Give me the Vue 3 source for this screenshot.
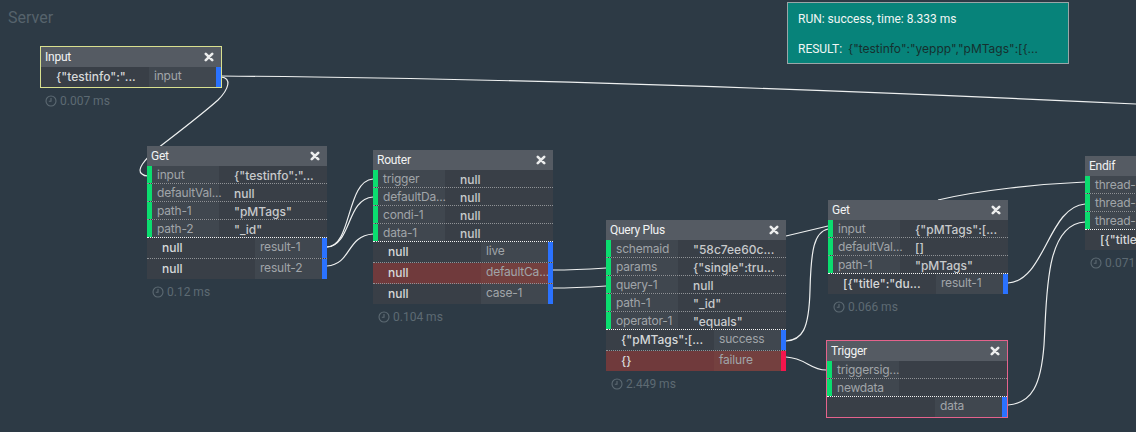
<script setup>
const nodes = [
  {
    id: 'input', title: 'Input', x: 40, y: 46, state: 'selected', time: '0.007 ms',
    inputs: [],
    outputs: [{ value: '{"testinfo":"...', label: 'input' }],
  },
  {
    id: 'get1', title: 'Get', x: 147, y: 146, time: '0.12 ms',
    inputs: [
      { label: 'input', value: '{"testinfo":"...' },
      { label: 'defaultVal...', value: 'null' },
      { label: 'path-1', value: '"pMTags"' },
      { label: 'path-2', value: '"_id"' },
    ],
    outputs: [
      { value: 'null', label: 'result-1' },
      { value: 'null', label: 'result-2' },
    ],
  },
  {
    id: 'router', title: 'Router', x: 373, y: 150, time: '0.104 ms',
    inputs: [
      { label: 'trigger', value: 'null' },
      { label: 'defaultDa...', value: 'null' },
      { label: 'condi-1', value: 'null' },
      { label: 'data-1', value: 'null' },
    ],
    outputs: [
      { value: 'null', label: 'live' },
      { value: 'null', label: 'defaultCa...', error: true },
      { value: 'null', label: 'case-1' },
    ],
  },
  {
    id: 'query', title: 'Query Plus', x: 606, y: 220, time: '2.449 ms',
    inputs: [
      { label: 'schemaid', value: '"58c7ee60c...' },
      { label: 'params', value: '{"single":tru...' },
      { label: 'query-1', value: 'null' },
      { label: 'path-1', value: '"_id"' },
      { label: 'operator-1', value: '"equals"' },
    ],
    outputs: [
      { value: '{"pMTags":[...', label: 'success' },
      { value: '{}', label: 'failure', error: true, failed: true },
    ],
  },
  {
    id: 'get2', title: 'Get', x: 828, y: 200, time: '0.066 ms',
    inputs: [
      { label: 'input', value: '{"pMTags":[...' },
      { label: 'defaultVal...', value: '[]' },
      { label: 'path-1', value: '"pMTags"' },
    ],
    outputs: [{ value: '[{"title":"du...', label: 'result-1' }],
  },
  {
    id: 'trigger', title: 'Trigger', x: 826, y: 340, state: 'flagged',
    inputs: [
      { label: 'triggersig...', value: '' },
      { label: 'newdata', value: '' },
    ],
    outputs: [{ value: '', label: 'data' }],
  },
  {
    id: 'endif', title: 'Endif', x: 1085, y: 156, time: '0.071 ms',
    inputs: [
      { label: 'thread-1', value: '' },
      { label: 'thread-2', value: '' },
      { label: 'thread-3', value: '' },
    ],
    outputs: [{ value: '[{"title":"du...', label: 'result-1' }],
  },
]

const wires = [
  'M221 76 C 520 78, 860 91, 1136 104',
  'M221 77 C 232 78, 229 89, 218 100 C 200 116, 176 134, 158 148 C 144 160, 136 170, 142 174 C 144 176, 146 176, 148 176',
  'M327 247 C 352 247, 346 181, 373 179',
  'M327 247 C 352 245, 346 199, 373 197',
  'M327 266 C 352 264, 346 236, 373 234',
  'M553 270 C 570 270, 590 269, 606 268',
  'M553 288 C 570 288, 590 287, 606 286',
  'M786 236 L 828 226',
  'M786 341 C 802 340, 809 330, 810 290 C 811 250, 814 232, 828 229',
  'M786 357 C 806 358, 810 370, 826 370',
  'M1008 283 C 1045 281, 1048 207, 1085 204',
  'M1008 405 C 1032 403, 1041 385, 1044 345 C 1047 300, 1044 224, 1085 222',
  'M938 200 C 980 190, 1040 184, 1085 182',
]
</script>

<template>
  <div class="canvas">
    <div class="server-title">Server</div>

    <svg class="wires" width="1136" height="432" viewBox="0 0 1136 432">
      <path v-for="d in wires" :key="d" :d="d" />
    </svg>

    <div
      v-for="node in nodes"
      :key="node.id"
      class="node"
      :style="{ left: node.x + 'px', top: node.y + 'px' }"
    >
      <div class="box" :class="node.state">
        <div class="node-header">
          <span>{{ node.title }}</span>
          <svg class="close" width="10" height="10" viewBox="0 0 10 10">
            <path d="M1.8 1.8 L8.2 8.2 M8.2 1.8 L1.8 8.2" />
          </svg>
        </div>
        <div v-if="node.inputs.length" class="inputs">
          <div v-for="row in node.inputs" :key="row.label" class="row in-row">
            <i class="handle green"></i>
            <span class="label">{{ row.label }}</span>
            <span class="value">{{ row.value }}</span>
          </div>
        </div>
        <div class="outputs">
          <div v-for="row in node.outputs" :key="row.label" class="row out-row" :class="{ error: row.error }">
            <span class="value">{{ row.value }}</span>
            <span class="label">{{ row.label }}</span>
            <i class="handle" :class="row.failed ? 'red' : 'blue'"></i>
          </div>
        </div>
      </div>
      <div v-if="node.time" class="timer">
        <svg width="12" height="12" viewBox="0 0 12 12">
          <circle cx="6" cy="6" r="5" />
          <path d="M6 3 V6.3 H3.8" />
        </svg>
        {{ node.time }}
      </div>
    </div>

    <div class="run-box">
      <div>RUN: success, time: 8.333 ms</div>
      <div class="result-line">RESULT: <span class="result-value">{"testinfo":"yeppp","pMTags":[{...</span></div>
    </div>
  </div>
</template>

<style scoped>
.canvas {
  position: relative;
  width: 1136px;
  height: 432px;
  overflow: hidden;
  background: #2d3a45;
  font-family: Roboto, "Liberation Sans", sans-serif;
  font-size: 12px;
}
.server-title { padding: 9px 0 0 8px; font-size: 16px; line-height: 18px; color: #56636c; }
.wires { position: absolute; left: 0; top: 0; }
.wires path { fill: none; stroke: #eef0f0; stroke-width: 1.2; }

.node { position: absolute; width: 180px; }
.box { background: #393f47; box-sizing: border-box; }
.box.selected { width: 182px; border: 1px solid #d9e08f; }
.box.flagged { width: 182px; border: 1px solid #e5638c; }
.node-header {
  display: flex;
  justify-content: space-between;
  align-items: center;
  height: 20px;
  padding: 0 7px 0 4px;
  background: #555b63;
  color: #f2f3f3;
  font-size: 12px;
  letter-spacing: -0.25px;
}
.close path { fill: none; stroke: #eceded; stroke-width: 2.6; stroke-linecap: round; }

.inputs { border-bottom: 1px dotted #f2f2f2; }
.row { display: flex; box-sizing: border-box; font-family: Inter, Roboto, sans-serif; }
.in-row { height: 18px; border-bottom: 1px dotted #8f9296; }
.in-row:last-child { height: 17px; border-bottom: 0; }
.out-row { height: 21px; border-bottom: 1px dotted #8f9296; }
.out-row:last-child { height: 20px; border-bottom: 0; }
.handle { flex: none; width: 5px; }
.green { background: #0bdd6f; }
.blue { background: #2a72ff; }
.red { background: #f5154c; }
.label {
  flex: none;
  width: 67px;
  padding-left: 5px;
  box-sizing: border-box;
  background: #40474f;
  color: #a0a5a9;
  white-space: nowrap;
  line-height: 17px;
  letter-spacing: -0.2px;
}
.value {
  flex: 1;
  min-width: 0;
  padding-left: 15px;
  color: #c8cacc;
  font-weight: 500;
  white-space: nowrap;
  line-height: 20px;
}
.out-row .value { color: #d6d8d9; }
.out-row .label { line-height: 18px; }
.out-row.error { background: #703a3c; }
.out-row.error .label { background: #74403f; }

.timer {
  display: flex;
  align-items: center;
  gap: 3px;
  padding: 6px 0 0 5px;
  color: #5d6a73;
  line-height: 14px;
}
.timer circle, .timer path { fill: none; stroke: #5d6a73; stroke-width: 1.1; }

.run-box {
  position: absolute;
  left: 787px;
  top: 2px;
  width: 282px;
  height: 62px;
  box-sizing: border-box;
  padding: 9px 10px;
  border: 1px solid #9aa6a8;
  background: #07837a;
  color: #f1f6f5;
  line-height: 14px;
}
.result-line { margin-top: 16px; }
.result-value { margin-left: 3px; color: #16302f; font-family: Inter, Roboto, sans-serif; }
</style>

<style>
body { background: #2d3a45; }
</style>
